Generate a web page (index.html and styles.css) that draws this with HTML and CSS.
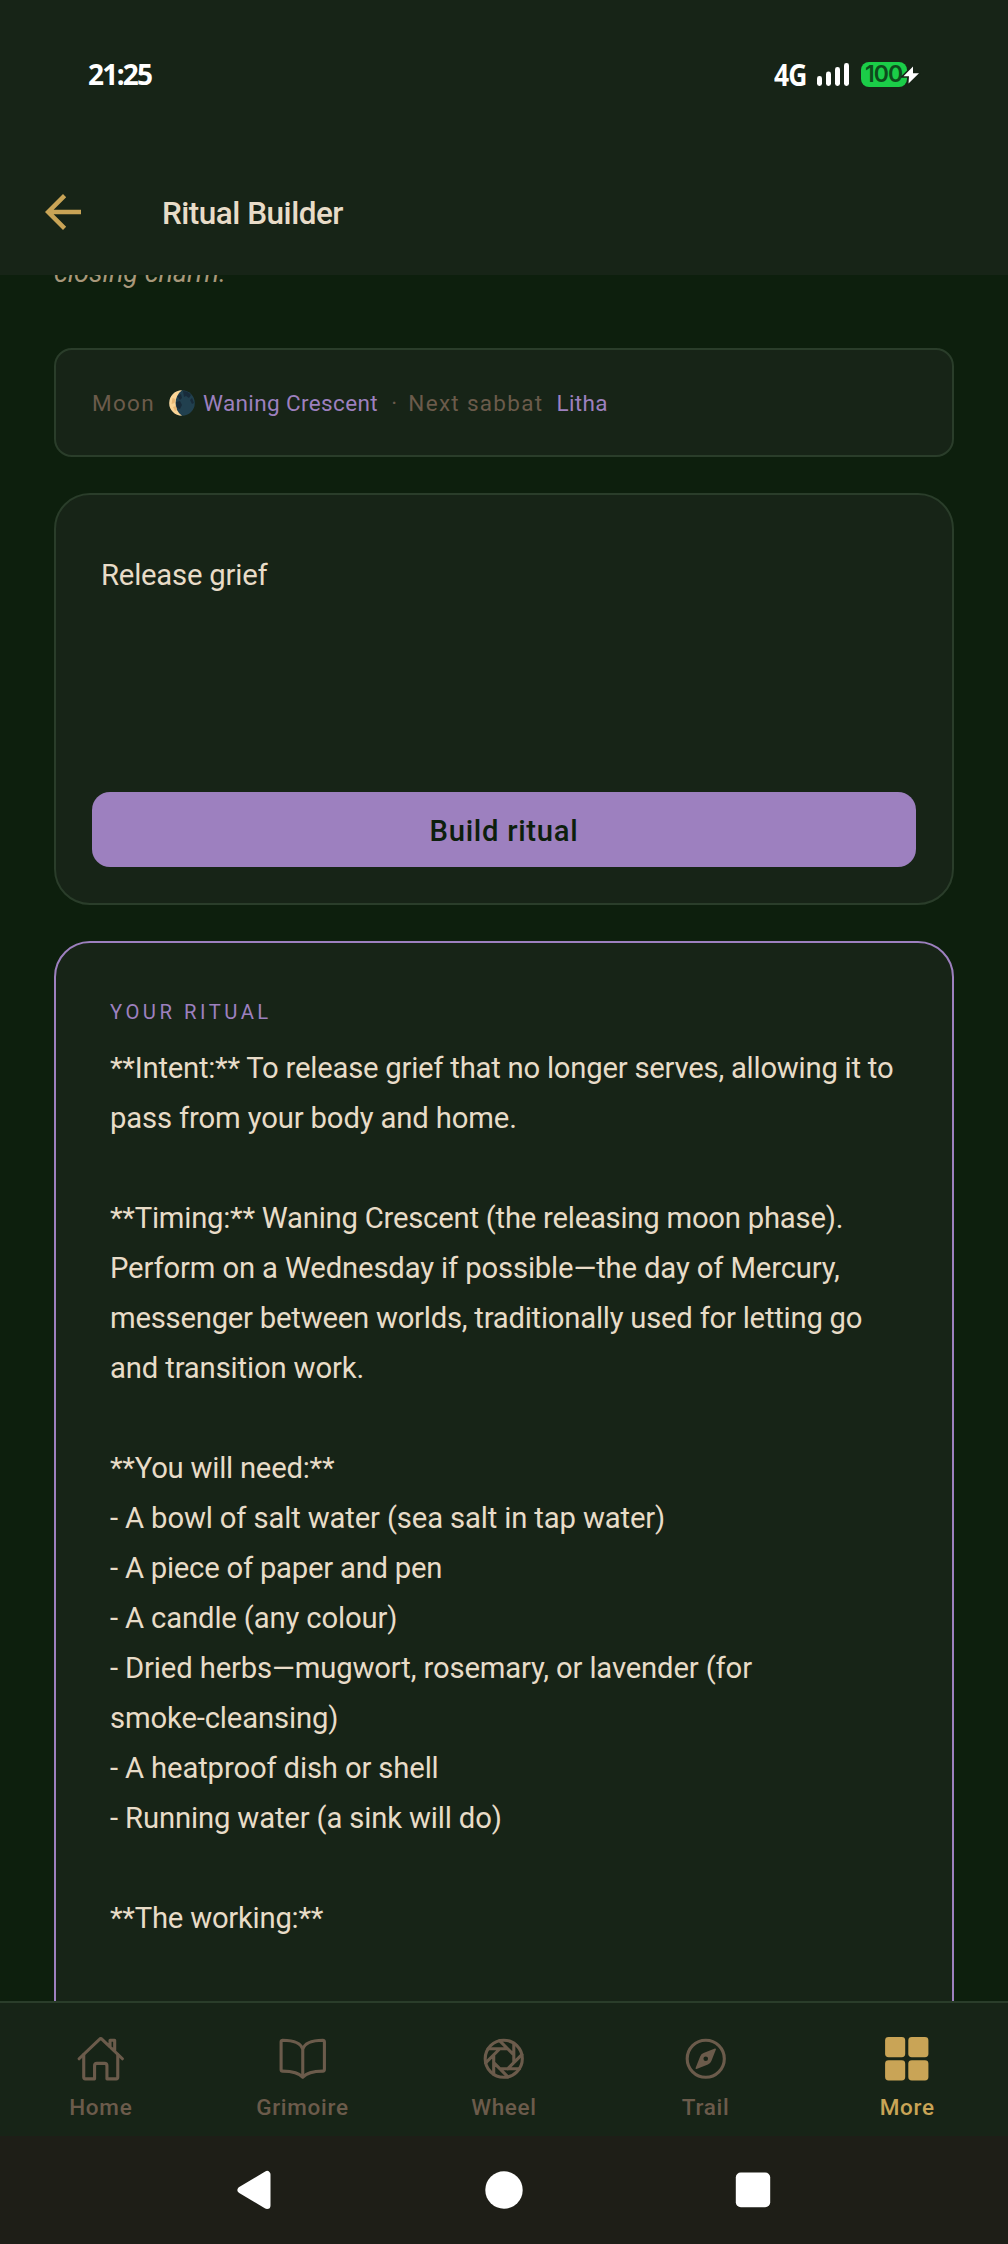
FILE: index.html
```html
<!DOCTYPE html>
<html lang="en">

<head>
    <meta charset="UTF-8">
    <title>Ritual Builder</title>
    <link rel="stylesheet" href="styles.css">
</head>

<body>
    <div class="screen">
        <!-- status bar -->
        <div class="status">
            <span class="time">21:25</span>
            <div class="status-right">
                <span class="network">4G</span>
                <svg class="signal" viewBox="0 0 32 23">
                    <rect x="0" y="13" width="5" height="10" rx="2.4" />
                    <rect x="9" y="8.6" width="5" height="14.4" rx="2.4" />
                    <rect x="18" y="4" width="5" height="19" rx="2.4" />
                    <rect x="27" y="0" width="5" height="23" rx="2.4" />
                </svg>
                <div class="battery">
                    <span>100</span>
                    <svg class="bolt" viewBox="0 0 20 22">
                        <path d="M12 2.500 2.500 12.200h5.500L7.500 19.500 18 9.200h-6z" />
                    </svg>
                </div>
            </div>
        </div>

        <!-- header -->
        <header class="header">
            <svg class="back" viewBox="0 0 24 24">
                <path d="M20 11H7.83l5.59-5.59L12 4l-8 8 8 8 1.41-1.41L7.83 13H20z" />
            </svg>
            <h1>Ritual Builder</h1>
        </header>

        <!-- content -->
        <main class="content">
            <p class="intro">closing charm.</p>

            <div class="card meta">
                <span class="label">Moon</span>
                <svg class="moon" viewBox="0 0 26 26">
                    <circle cx="13" cy="13" r="12.8" fill="#21404f" />
                    <path d="M14 1q5 0 8 4l-2 3-3-2-2 1zM23 8l2 5-2 1-2-4zM8 6l4-2 1 4-2 2zM7 12l4-1 2 4-2 4-3-1z" fill="#182b3a" />
                    <path d="M13 .2a12.8 12.8 0 0 0 0 25.6C4.5 20 4.5 6 13 .2z" fill="#fbd596" />
                    <path d="M3.5 8l3 1-1 4-3 1zM4 17l3-1 1 4-2 1z" fill="#e9b876" />
                </svg>
                <span class="value">Waning Crescent</span>
                <span class="label dot">·</span>
                <span class="label sabbat">Next sabbat</span>
                <span class="value">Litha</span>
            </div>

            <div class="card builder">
                <div class="input">Release grief</div>
                <div class="button">Build ritual</div>
            </div>

            <div class="card result">
                <h2>YOUR RITUAL</h2>
                <div class="ritual"><span class="tight">**Intent:** To release grief that no longer serves, allowing it to</span>
pass from your body and home.

<span class="tight">**Timing:** Waning Crescent (the releasing moon phase).</span>
Perform on a Wednesday if possible—the day of Mercury,
<span class="tight">messenger between worlds, traditionally used for letting go</span>
and transition work.

<span class="tight">**You will need:**</span>
- A bowl of salt water (sea salt in tap water)
<span class="tight">- A piece of paper and pen</span>
- A candle (any colour)
- Dried herbs—mugwort, rosemary, or lavender (for
smoke-cleansing)
- A heatproof dish or shell
- Running water (a sink will do)

<span class="tight">**The working:**</span></div>
            </div>
        </main>

        <!-- tabs -->
        <nav class="tabs">
            <div class="tab">
                <svg viewBox="0 0 512 512">
                    <path d="M80 212v236a16 16 0 0 0 16 16h96V328a24 24 0 0 1 24-24h80a24 24 0 0 1 24 24v136h96a16 16 0 0 0 16-16V212" />
                    <path d="M480 256 266.89 52c-5-5.28-16.69-5.34-21.78 0L32 256M400 179V64h-48v69" />
                </svg>
                <span>Home</span>
            </div>
            <div class="tab">
                <svg viewBox="0 0 512 512">
                    <path d="M256 160c16-63.16 76.43-95.41 208-96a15.94 15.94 0 0 1 16 16v288a16 16 0 0 1-16 16c-128 0-177.45 25.81-208 64-30.37-38-80-64-208-64-9.88 0-16-8.05-16-17.93V80a15.94 15.94 0 0 1 16-16c131.57.59 192 32.84 208 96zM256 160v288" />
                </svg>
                <span>Grimoire</span>
            </div>
            <div class="tab">
                <svg viewBox="0 0 512 512">
                    <circle cx="256" cy="256" r="192" />
                    <path d="M360 94.59V296M443.13 212.87 296 360M417.41 360H216M299.13 443.13l-144-144M152 416V216M68.87 299.13l144-144M94.59 152H288M212.87 68.87 360 216" />
                </svg>
                <span>Wheel</span>
            </div>
            <div class="tab">
                <svg viewBox="0 0 512 512">
                    <circle cx="256" cy="256" r="192" />
                    <path class="solid" d="M350.67 150.93l-117.2 46.88a64 64 0 0 0-35.66 35.66l-46.88 117.2a8 8 0 0 0 10.4 10.4l117.2-46.88a64 64 0 0 0 35.66-35.66l46.88-117.2a8 8 0 0 0-10.4-10.4zM256 280a24 24 0 1 1 24-24 24 24 0 0 1-24 24z" />
                </svg>
                <span>Trail</span>
            </div>
            <div class="tab active">
                <svg viewBox="0 0 512 512">
                    <rect class="solid" x="32" y="32" width="208" height="208" rx="36" />
                    <rect class="solid" x="272" y="32" width="208" height="208" rx="36" />
                    <rect class="solid" x="32" y="272" width="208" height="208" rx="36" />
                    <rect class="solid" x="272" y="272" width="208" height="208" rx="36" />
                </svg>
                <span>More</span>
            </div>
        </nav>

        <!-- system buttons -->
        <div class="system">
            <svg viewBox="0 0 40 40">
                <path d="M6 20 32 4.5v31z" fill="#fff" stroke="#fff" stroke-width="7" stroke-linejoin="round" />
            </svg>
            <svg viewBox="0 0 40 40">
                <circle cx="20" cy="20" r="18.7" fill="#fff" />
            </svg>
            <svg viewBox="0 0 40 40">
                <rect x="2.8" y="2.6" width="34.4" height="34.6" rx="5" fill="#fff" />
            </svg>
        </div>
    </div>
</body>

</html>
```
FILE: styles.css
```css
* {
    margin: 0;
    padding: 0;
    box-sizing: border-box;
}

body {
    background: #0d1f0d;
    font-family: Roboto, "Liberation Sans", sans-serif;
    color: #e8dcc8;
}

.screen {
    display: flex;
    flex-direction: column;
    width: 1008px;
    height: 2244px;
    overflow: hidden;
}

/* status bar */

.status {
    display: flex;
    justify-content: space-between;
    align-items: center;
    height: 149px;
    padding: 0 89px 0 88px;
    background: #172417;
    color: #fff;
    font-family: "Noto Sans", sans-serif;
    font-weight: 700;
}

.time {
    font-size: 28px;
    letter-spacing: -1.7px;
    padding-bottom: 1px;
}

.status-right {
    display: flex;
    align-items: center;
}

.network {
    width: 43px;
    font-family: "Open Sans", sans-serif;
    font-size: 30px;
    letter-spacing: -1px;
    transform: scaleX(.88);
    transform-origin: left;
}

.signal {
    width: 32px;
    height: 23px;
    fill: #fff;
}

.battery {
    position: relative;
    width: 46px;
    height: 25px;
    margin: 0 12px 0 12px;
    border-radius: 8px;
    background: #1bcd48;
    color: #0e4a1c;
    font-family: Inter, sans-serif;
    font-size: 23px;
    font-weight: 600;
    line-height: 25px;
    letter-spacing: -1px;
    padding-left: 4px;
}

.bolt {
    position: absolute;
    left: 40px;
    top: 2px;
    width: 20px;
    height: 22px;
    fill: #fff;
    stroke: #172417;
    stroke-width: 3;
    paint-order: stroke;
}

/* header */

.header {
    display: flex;
    align-items: center;
    height: 126px;
    padding-left: 36px;
    background: #172417;
}

.back {
    width: 54px;
    height: 54px;
    margin-right: 72px;
    fill: #c9a456;
}

.header h1 {
    font-size: 31.5px;
    font-weight: 500;
    line-height: 40px;
    letter-spacing: -.5px;
    padding-top: 3px;
}

/* content */

.content {
    flex: 1;
    overflow: hidden;
    padding: 0 54px;
}

.intro {
    margin-top: -22px;
    margin-bottom: 54px;
    font-size: 27px;
    line-height: 41px;
    font-style: italic;
    color: #a8977a;
}

.card {
    margin-bottom: 36px;
    border: 2px solid #2a3d2a;
    border-radius: 36px;
    background: #172417;
}

.meta {
    display: flex;
    align-items: center;
    height: 109px;
    padding-left: 36px;
    border-radius: 18px;
    font-size: 22.5px;
    white-space: nowrap;
}

.label {
    color: #6b5b4b;
    letter-spacing: 1.3px;
}

.value {
    color: #9d80bf;
    letter-spacing: .38px;
}

.moon {
    width: 26px;
    height: 26px;
    margin: 0 8px 0 14px;
}

.dot {
    margin-left: 13px;
}

.sabbat {
    margin: 0 13px 0 10px;
}

.builder {
    height: 412px;
    padding: 36px;
}

.input {
    height: 261px;
    padding: 26px 9px;
    font-size: 29.25px;
    line-height: 36px;
    letter-spacing: -.2px;
}

.button {
    height: 75px;
    border-radius: 18px;
    background: #9d80bf;
    color: #0d1f0d;
    font-size: 29.25px;
    font-weight: 500;
    line-height: 78px;
    letter-spacing: .7px;
    text-align: center;
}

.result {
    height: 1300px;
    padding: 55px 54px;
    border-color: #9d80bf;
}

.result h2 {
    font-size: 20.25px;
    font-weight: 400;
    line-height: 28px;
    letter-spacing: 3.5px;
    color: #9d80bf;
}

.ritual {
    margin-top: 17px;
    font-size: 29.25px;
    line-height: 50px;
    letter-spacing: -.145px;
    white-space: pre;
}

.tight {
    letter-spacing: -.23px;
}

/* tabs */

.tabs {
    display: flex;
    height: 135px;
    border-top: 2px solid #2a3d2a;
    background: #172417;
}

.tab {
    flex: 1;
    display: flex;
    flex-direction: column;
    align-items: center;
    padding-top: 31px;
    color: #6b5b4b;
    font-size: 22.5px;
    font-weight: 500;
    line-height: 28px;
    letter-spacing: .7px;
}

.tab svg {
    width: 49.5px;
    height: 49.5px;
    margin-bottom: 9.5px;
    fill: none;
    stroke: currentColor;
    stroke-width: 32;
    stroke-linecap: round;
    stroke-linejoin: round;
}

.tab .solid {
    fill: currentColor;
    stroke: none;
}

.active {
    color: #c9a456;
}

/* system buttons */

.system {
    display: flex;
    justify-content: center;
    gap: 209px;
    height: 108px;
    padding-top: 34px;
    background: #1e1e17;
}

.system svg {
    width: 40px;
    height: 40px;
}
```
